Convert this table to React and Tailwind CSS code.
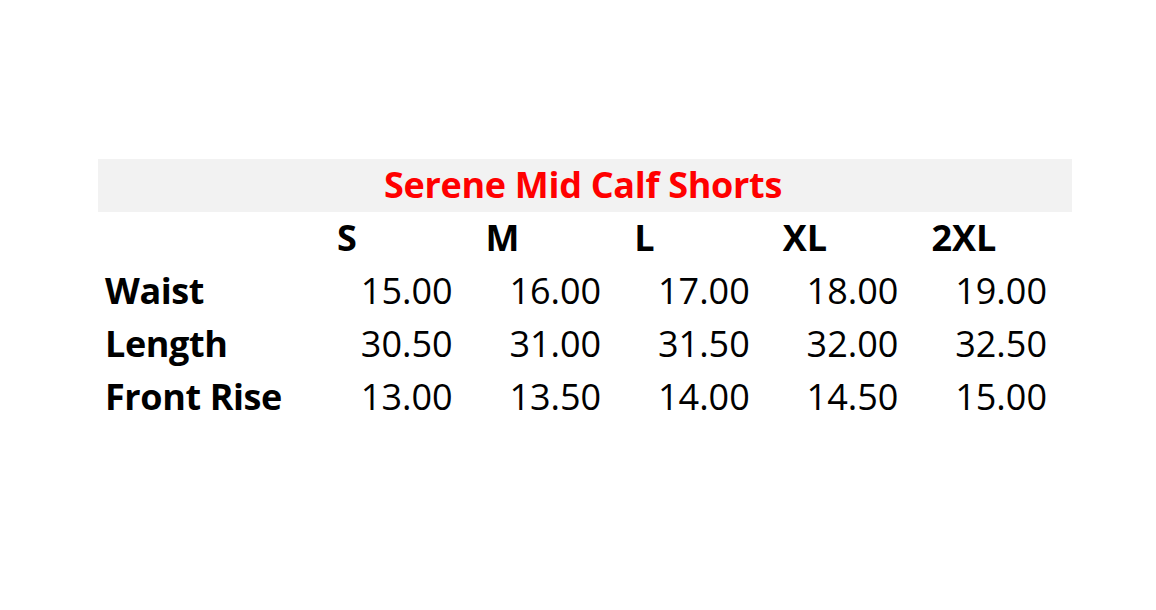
const sizes = ["S", "M", "L", "XL", "2XL"];
const rows = [
  ["Waist", ["15.00", "16.00", "17.00", "18.00", "19.00"]],
  ["Length", ["30.50", "31.00", "31.50", "32.00", "32.50"]],
  ["Front Rise", ["13.00", "13.50", "14.00", "14.50", "15.00"]],
];

export default function App() {
  return (
    <div
      className="w-[1156px] h-[610px] bg-white text-black pt-[159px] pl-[98px]"
      style={{ fontFamily: '"Open Sans", "Noto Sans", sans-serif' }}
    >
      <div className="w-[974px]">
        <div className="h-[53px] bg-[#f2f2f2] flex justify-center">
          <span className="text-[36px] leading-[51px] font-bold text-[#ff0000] tracking-[-0.3px] pr-[4px]">
            Serene Mid Calf Shorts
          </span>
        </div>
        <div className="grid grid-cols-[236px_repeat(5,148.6px)]">
          <div className="h-[53px]"></div>
          {sizes.map((s) => (
            <div key={s} className="h-[53px] pl-[3px] text-[36px] leading-[51px] font-bold">
              {s}
            </div>
          ))}
          {rows.map(([label, vals]) => (
            <>
              <div key={label} className="h-[53px] pl-[7px] text-[36px] leading-[51px] font-bold tracking-[-0.4px] whitespace-nowrap">
                {label}
              </div>
              {vals.map((v, i) => (
                <div key={label + i} className="h-[53px] pr-[30px] text-right text-[36px] leading-[51px]">
                  {v}
                </div>
              ))}
            </>
          ))}
        </div>
      </div>
    </div>
  );
}
